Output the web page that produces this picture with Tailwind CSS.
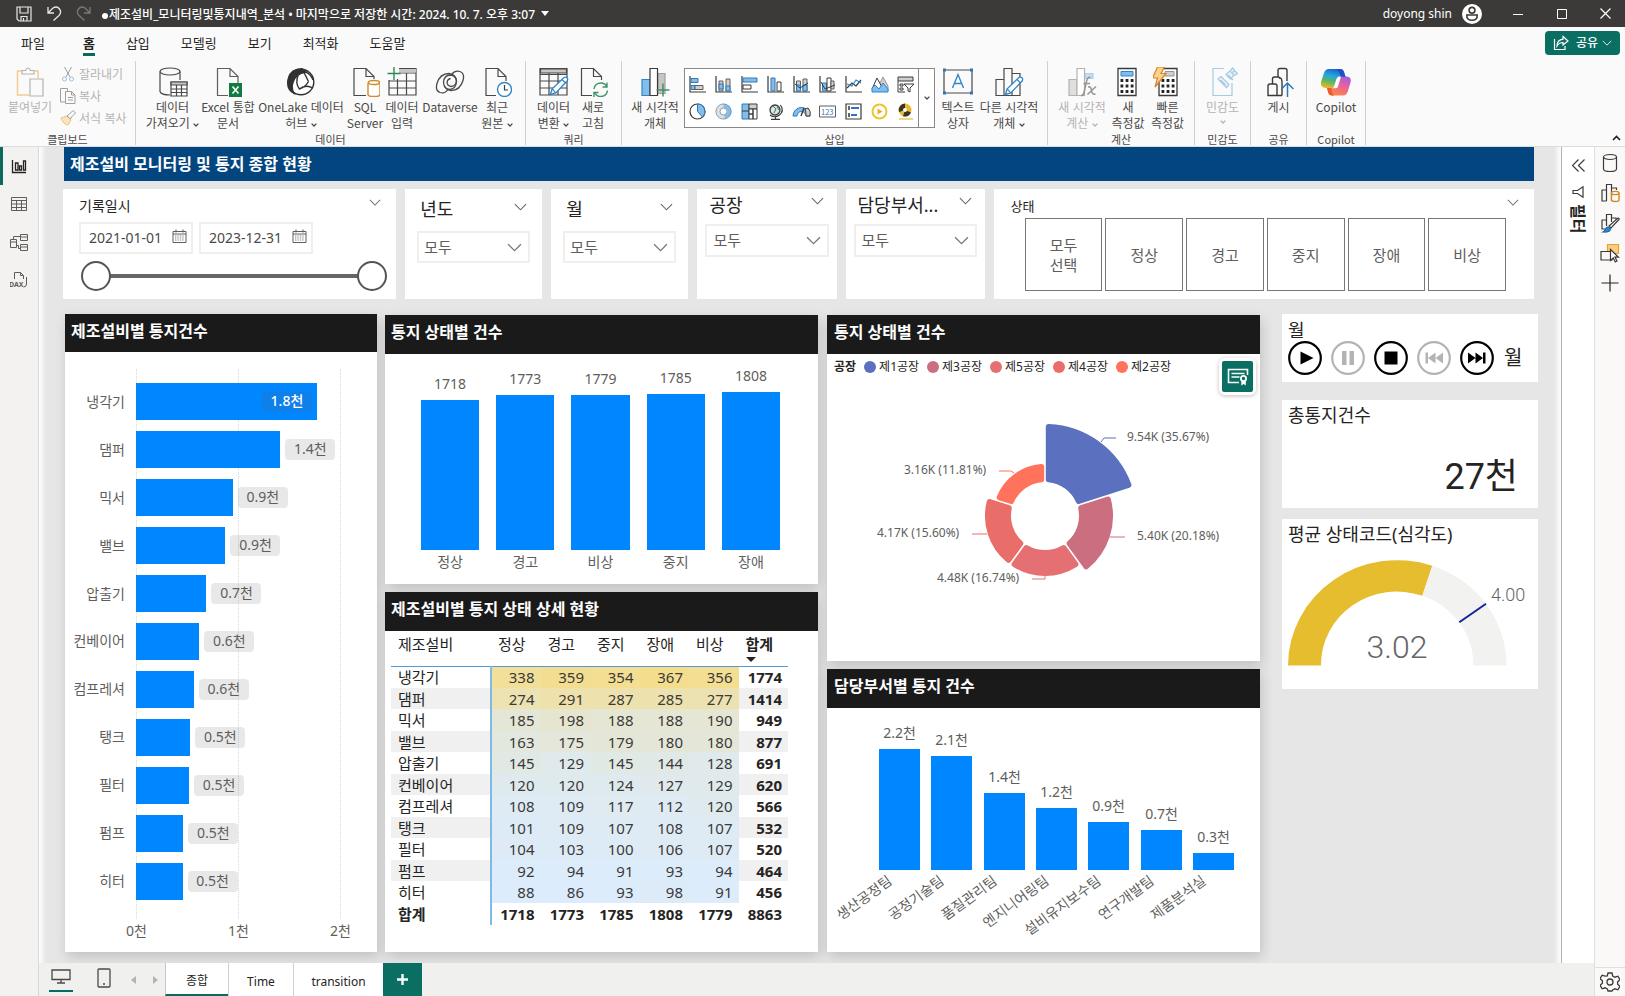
<!DOCTYPE html>
<html lang="ko">
<head>
<meta charset="utf-8">
<title>제조설비_모니터링및통지내역_분석</title>
<script src="https://cdn.jsdelivr.net/npm/@tailwindcss/browser@4"></script>
</head>
<body class="font-['Noto_Sans','Noto_Sans_CJK_KR',sans-serif] text-[#252423] bg-[#e6e6e6]">
<svg class="hidden">
  <symbol id="chev" viewBox="0 0 14 8"><path d="M1 1l6 6 6-6" fill="none" stroke="currentColor" stroke-width="1.2"/></symbol>
  <symbol id="mini" viewBox="0 0 6 4"><path d="M.6 .6l2.4 2.4 2.4-2.4" fill="none" stroke="currentColor" stroke-width="1.3"/></symbol>
  <symbol id="cal" viewBox="0 0 15 14"><path d="M1 2.5h13v11H1zM1 5h13M4 .5v3M11 .5v3" fill="none" stroke="#605e5c"/><path d="M3 7h9M3 9h9M3 11h9" stroke="#8a8886" stroke-dasharray="1.4 1"/></symbol>
  <symbol id="pencil" viewBox="0 0 20 20"><path d="M1.500 18.500l1.500-5.500L15 1.500q1.800-1 3 .3t.3 3L6.800 17z" fill="#fff" stroke="#2f86c9" stroke-width="1.300"/><path d="M3.200 13l3.600 3.800M13 3.500l3.500 3.500" stroke="#2f86c9" stroke-width="1.100"/></symbol>
</svg>

<div class="h-screen min-h-[900px] flex flex-col overflow-hidden">

<!-- title bar -->
<header class="h-[27px] shrink-0 bg-[#3b3a38] text-white flex items-center pl-4 pr-[14px]">
  <button aria-label="저장" class="w-4"><svg class="size-4" viewBox="0 0 16 16" fill="none" stroke="#e8e8e8" stroke-width="1.2"><path d="M1 1h14v14H3l-2-2zM4 1v6h8V1M5 15v-4.500h6V15M7.500 12v3"/></svg></button>
  <button aria-label="실행 취소" class="ml-[14px]"><svg class="size-4" viewBox="0 0 16 16" fill="none" stroke="#e8e8e8" stroke-width="1.3"><path d="M2 1v6h6M2 7l5-5q4-2.500 6.500 1t-.500 6.500L7.500 14.500"/></svg></button>
  <button aria-label="다시 실행" class="ml-[14px]"><svg class="size-4" viewBox="0 0 16 16" fill="none" stroke="#7b7a78" stroke-width="1.3"><path d="M14 1v6H8M14 7L9 2Q5-.500 2.500 3t.500 6.500l5.500 5"/></svg></button>
  <i class="ml-[10px] mr-px mt-1 size-[6px] rounded-full bg-white"></i>
  <h1 class="mt-[2px] text-xs font-medium whitespace-nowrap">제조설비_모니터링및통지내역_분석 • 마지막으로 저장한 시간: 2024. 10. 7. 오후 3:07</h1>
  <svg class="ml-[6px] w-2 h-[5px]" viewBox="0 0 8 5"><path d="M0 0h8L4 5z" fill="#fff"/></svg>
  <span class="ml-auto text-xs">doyong shin</span>
  <svg class="ml-[10px] size-5" viewBox="0 0 20 20"><circle cx="10" cy="10" r="10" fill="#fff"/><g fill="none" stroke="#3b3a38" stroke-width="1.600"><circle cx="10" cy="6.300" r="2.900"/><path d="M4.800 11h10.400q.300 5.300-5.200 5.300T4.800 11z"/></g></svg>
  <button aria-label="최소화" class="ml-[31px]"><svg class="w-[10px] h-[10px]" viewBox="0 0 10 10"><path d="M0 5.500h10" stroke="#fff"/></svg></button>
  <button aria-label="최대화" class="ml-[34px]"><svg class="w-[10px] h-[10px]" viewBox="0 0 10 10"><path d="M.5 .5h9v9h-9z" fill="none" stroke="#fff"/></svg></button>
  <button aria-label="닫기" class="ml-[33px]"><svg class="w-[11px] h-[11px]" viewBox="0 0 11 11"><path d="M.5 .5l10 10M10.500 .5l-10 10" stroke="#fff" stroke-width="1.200"/></svg></button>
</header>

<!-- ribbon tabs -->
<nav class="h-[34px] shrink-0 bg-[#fafafa] flex items-center pl-[21px] pr-[5px] pb-[3px] text-[13px] leading-[18px]">
  <button class="mr-[38px]">파일</button>
  <div class="flex gap-[31px]">
    <button class="font-bold relative">홈<span class="absolute inset-x-0 -bottom-1 h-[3px] bg-[#0b6a5d]"></span></button>
    <button>삽입</button><button>모델링</button><button>보기</button><button>최적화</button><button>도움말</button>
  </div>
  <button class="ml-auto h-6 w-[75px] rounded bg-[#0a6f62] text-white text-xs font-medium flex items-center justify-center gap-[7px]">
    <svg class="w-4 h-4" viewBox="0 0 16 16" fill="none" stroke="#fff" stroke-width="1.200"><path d="M1.500 4v10.500h10.500V11M10 1.500l5 4.500-5 4V7.500Q6 7.500 4 11q0-6 6-6.800z"/></svg>
    공유<svg class="w-[10px] h-[6px] -ml-[3px]"><use href="#chev"/></svg>
  </button>
</nav>

<!-- ribbon -->
<section class="h-[86px] shrink-0 bg-[#fafafa] flex font-['Noto_Sans_CJK_KR',sans-serif] text-xs leading-4 relative text-[#4a4948] whitespace-nowrap border-b border-[#dcdcdc] [&>div]:border-r [&>div]:border-[#d2d0ce] [&>div]:flex [&>div]:flex-col [&>div]:items-center [&>div]:mb-px [&_h2]:text-[11px] [&_h2]:leading-[11px] [&_button]:flex [&_button]:flex-col [&_button]:items-center [&_button_svg]:shrink-0">
  <div class="w-[136px]">
    <div class="h-[73px] w-full flex text-[#b5b3b1]">
      <button class="w-[60px] pt-[6px] gap-[2px]"><svg class="size-[30px]" viewBox="0 0 30 30" fill="none"><path d="M11 4H2.500v24H14M20 4h3v7" stroke="#f3cb95" stroke-width="1.500"/><path d="M7 7V3.500h3.500Q11.500 1 13 1t2.500 2.500H19V7zM15 12h13v17H15z" stroke="#b5b3b1" fill="#fafafa" stroke-width="1.200"/></svg><span>붙여넣기</span></button>
      <div class="flex flex-col pt-[5px] gap-[6px] [&>button]:!flex-row [&>button]:gap-[3px]">
        <button><svg class="size-4" viewBox="0 0 16 16" fill="none"><path d="M4.500 1l5.500 10M11.500 1L6 11" stroke="#a19f9d"/><circle cx="4.500" cy="13" r="2" stroke="#9cc0de"/><circle cx="11.500" cy="13" r="2" stroke="#9cc0de"/></svg>잘라내기</button>
        <button><svg class="size-4" viewBox="0 0 16 16" fill="none" stroke="#a19f9d"><path d="M5 14H.500V.500h7V3M5.500 3.500h6l3.500 3.500v8.500H5.500zM11.500 3.500V7H15M8 9.500h5M8 12h5"/></svg>복사</button>
        <button><svg class="size-4" viewBox="0 0 16 16" fill="none"><path d="M1 8l6-2 4 4-3 5q-5-1-7-7z" fill="#fbe3c0" stroke="#f0c080"/><path d="M7 6l2-1.500 4-4 2.500 2.500-4 4L10.500 9z" stroke="#a19f9d"/></svg>서식 복사</button>
      </div>
    </div>
    <h2>클립보드</h2>
  </div>

  <div class="w-[390px]">
    <div class="h-[73px] w-full flex pl-2 [&>button]:pt-[6px] [&>button]:gap-[2px]">
      <button class="w-[57px]"><svg class="size-[30px]" viewBox="0 0 30 30" fill="none" stroke="#4a4948" stroke-width="1.200"><ellipse cx="12" cy="4.500" rx="10" ry="3.500"/><path d="M2 4.500v20q1 3.500 10 3.500M22 4.500V13"/><path d="M13 15h16v14H13z" fill="#fff"/><path d="M13 15h16v3H13z" fill="#c8c6c4"/><path d="M13 22h16M13 25.500h16M18.500 18v11M23.500 18v11"/></svg><span>데이터<br>가져오기 <svg class="inline w-[6px] h-1"><use href="#mini"/></svg></span></button>
      <button class="w-[54px]"><svg class="size-[30px]" viewBox="0 0 30 30"><path d="M15 28.500H4.500V1.500H17l8 8V16M17 1.500v8h8" fill="none" stroke="#605e5c" stroke-width="1.200"/><path d="M16 16h13v14H16z" fill="#107c41"/><path d="M19.500 19.500l6 7M25.500 19.500l-6 7" stroke="#fff" stroke-width="1.600"/></svg><span>Excel 통합<br>문서</span></button>
      <button class="w-[92px]"><svg class="size-[30px]" viewBox="0 0 30 30" fill="none" stroke="#323130" stroke-width="1.400"><circle cx="15" cy="15" r="12.800" fill="#fff"/><path d="M16 1.800Q5 2 2.500 11-.500 22 8 26.500q-3-6-1-11Q9 7 20 5z" fill="#323130"/><path d="M12 8.500q-3 8 1.500 13.500 6-2 9-7.500M13.500 22q6-5 13.500-1M19.500 5q5 1.500 7.500 8M18 5.500l4.500 9"/></svg><span>OneLake 데이터<br>허브 <svg class="inline w-[6px] h-1"><use href="#mini"/></svg></span></button>
      <button class="w-[36px]"><svg class="size-[30px]" viewBox="0 0 30 30" fill="none"><path d="M16 28.500H4V1.500h12l8 8V12M16 1.500v8h8" stroke="#4a4948" stroke-width="1.200"/><path d="M18 15.500v12q0 2 6 2t6-2v-12" stroke="#d08a2a" stroke-width="1.400" fill="#fff"/><ellipse cx="24" cy="15.500" rx="5.500" ry="2" stroke="#d08a2a" stroke-width="1.400" fill="#fff"/></svg><span>SQL<br>Server</span></button>
      <button class="w-[38px]"><svg class="size-[30px]" viewBox="0 0 30 30" fill="none" stroke="#4a4948" stroke-width="1.200"><path d="M12 1.500h17V28H2V13M12 6h17M2 14h27M2 21h27M10.500 12v16M19.500 6v22"/><path d="M12 2h17v3.500H12z" fill="#c8c6c4" stroke="none"/><path d="M7 0v13M.500 6.500h13" stroke="#2b8a57" stroke-width="1.400"/></svg><span>데이터<br>입력</span></button>
      <button class="w-[58px]"><svg class="size-[30px]" viewBox="0 0 30 30" fill="none" stroke="#4a4948" stroke-width="1.300"><path d="M25 4.500q5 2 3 9-3 10-12 10-7-1-7.500-8Q9 8 15.500 8q5.500.500 6 6-.500 5-5.500 5.500-3.500-.500-4-4 .500-3.500 3.500-4"/><path d="M5 25.500q-5-2-3-9 3-10 12-10 7 1 7.500 8-.500 7.500-7 8-3 0-5-3M25 4.500Q20 3 17 7M5 25.500q5 1.500 8-3"/></svg><span>Dataverse</span></button>
      <button class="w-[36px]"><svg class="size-[30px]" viewBox="0 0 30 30" fill="none"><path d="M14 28.500H4V1.500h12l8 8V14M16 1.500v8h8" stroke="#4a4948" stroke-width="1.200"/><circle cx="22.500" cy="22.500" r="7" fill="#fff" stroke="#2f86c9" stroke-width="1.400"/><path d="M22.500 18v5H26" stroke="#3b3a39" stroke-width="1.200"/></svg><span>최근<br>원본 <svg class="inline w-[6px] h-1"><use href="#mini"/></svg></span></button>
    </div>
    <h2>데이터</h2>
  </div>

  <div class="w-[96px]">
    <div class="h-[73px] w-full flex pl-[7px] [&>button]:pt-[6px] [&>button]:gap-[2px]">
      <button class="w-[41px]"><svg class="size-[30px]" viewBox="0 0 30 30" fill="none" stroke="#4a4948" stroke-width="1.200"><path d="M1 1.500h27v26.500H1zM1 7.500h27M1 14h27M1 21h27M10 6v22M19 6v22"/><path d="M1.500 2h26v4h-26z" fill="#c8c6c4"/><use href="#pencil" x="10" y="9" width="20" height="20"/></svg><span>데이터<br>변환 <svg class="inline w-[6px] h-1"><use href="#mini"/></svg></span></button>
      <button class="w-[38px]"><svg class="size-[30px]" viewBox="0 0 30 30" fill="none"><path d="M14 28.500H3.500V1.500h12l8 8V13M15.500 1.500v8h8" stroke="#4a4948" stroke-width="1.200"/><path d="M16 22q1-6 7-6 4 0 5.500 3.500M29 15.500v4.500h-4.500M29.500 23.500q-1 6-7 6-4 0-5.500-3.500M16 30v-4.500h4.500" stroke="#3f9268" stroke-width="1.400"/></svg><span>새로<br>고침</span></button>
    </div>
    <h2>쿼리</h2>
  </div>

  <div class="w-[426px]">
    <div class="h-[73px] w-full flex pl-1 [&>button]:pt-[6px] [&>button]:gap-[2px]">
      <button class="w-[58px]"><svg class="size-[30px]" viewBox="0 0 30 30" stroke-width="1.200"><path d="M2 12.500h8v16H2z" fill="#83bdec" stroke="#2f86c9"/><path d="M18 6.500h7v20h-7z" fill="#c8c6c4" stroke="#a19f9d"/><path d="M10 1.500h7.500v27H10z" fill="#fff" stroke="#3b3a39"/><path d="M23 16.500v13M16.500 23h13" stroke="#3f9268" stroke-width="1.500"/></svg><span>새 시각적<br>개체</span></button>
      <div class="mt-[7px] h-[60px] w-[251px] border border-[#8a8886] bg-white flex">
        <div id="gallery" class="flex-1 grid grid-cols-9 items-center justify-items-center py-[2px] [&_svg]:size-[17px] [&_svg]:overflow-visible"></div>
        <button aria-label="더 보기" class="w-4 border-l border-[#8a8886] justify-center"><svg class="w-[6px] h-1"><use href="#mini"/></svg></button>
      </div>
      <button class="w-[46px]"><svg class="size-[30px]" viewBox="0 0 30 30" fill="none"><path d="M1 3h28v23H1z" stroke="#4a4948" stroke-width="1.200"/><path d="M9.500 21L15 7.500 20.500 21M11.500 16.500h7" stroke="#2f86c9" stroke-width="1.400"/><path d="M0 1.500h3v3H0zM27 1.500h3v3h-3zM0 24.500h3v3H0zM27 24.500h3v3h-3z" fill="#2f78b5"/></svg><span>텍스트<br>상자</span></button>
      <button class="w-[56px]"><svg class="size-[30px]" viewBox="0 0 30 30" fill="none" stroke="#4a4948" stroke-width="1.200"><path d="M10 12.500H2v16h8M10 28.500v-27h8v27zM18 6.500h8v22h-8"/><use href="#pencil" x="10" y="9" width="20" height="20"/></svg><span>다른 시각적<br>개체 <svg class="inline w-[6px] h-1"><use href="#mini"/></svg></span></button>
    </div>
    <h2>삽입</h2>
  </div>

  <div class="w-[147px]">
    <div class="h-[73px] w-full flex pl-[8px] [&>button]:pt-[6px] [&>button]:gap-[2px]">
      <button class="w-[52px] text-[#b5b3b1]"><svg class="size-[30px]" viewBox="0 0 30 30" stroke-width="1.200" stroke="#b5b3b1"><path d="M2 12.500h8v16H2z" fill="#e1dfdd"/><path d="M18 6.500h8v5h-8z" fill="#c4dff2" stroke="#a9cfe9"/><path d="M10 1.500h7.500v27H10z" fill="#fff"/><path d="M23.500 10.500q-3-1-4 4l-2.500 11q-.800 3.500-3 3M16.500 16.500h6.500M21 20q3-1 3.500 3.500t4 3.500M29 19.500L20.500 27.500" fill="none" stroke="#979593" stroke-width="1.500"/></svg><span>새 시각적<br>계산 <svg class="inline w-[6px] h-1"><use href="#mini"/></svg></span></button>
      <button class="w-[40px]"><svg class="size-[30px]" viewBox="0 0 30 30"><path d="M5 1.500h18v27H5z" fill="#fff" stroke="#3b3a39" stroke-width="1.300"/><path d="M8 4.500h12v4.500H8z" fill="#83bdec" stroke="#2f86c9"/><path d="M7.500 13.500h13M7.500 19h13M7.500 24.500h13" stroke="#252423" stroke-width="2.800" stroke-dasharray="2.800 2.300"/></svg><span>새<br>측정값</span></button>
      <button class="w-[39px]"><svg class="size-[30px]" viewBox="0 0 30 30"><path d="M6 1.500h18v27H6z" fill="#fff" stroke="#3b3a39" stroke-width="1.300"/><path d="M12 4.500h9v4.500h-9z" fill="#d2d0ce" stroke="#979593"/><path d="M8.500 13.500h13M8.500 19h13M8.500 24.500h13" stroke="#252423" stroke-width="2.800" stroke-dasharray="2.800 2.300"/><path d="M4.500 0h7L8 6.500h5L2 20l2.500-9H-.500z" fill="#fbd38b" stroke="#d8842a" stroke-width="1.200"/></svg><span>빠른<br>측정값</span></button>
    </div>
    <h2>계산</h2>
  </div>

  <div class="w-[56px]">
    <div class="h-[73px] pt-[6px] text-[#b5b3b1]"><button class="gap-[2px]"><svg class="size-[30px]" viewBox="0 0 30 30" fill="none" stroke="#a5cbe3" stroke-width="1.200"><path d="M16 1.500H5v27h19V16"/><path d="M10 12l3-2.500 8 8-2.500 3zM12.500 13l5 5M18 7.500l4-3.500 4 4-3.500 4zM22 4l2.500-3 2 2L25 5l2.500-.500 2 2L26 8.500M20 8l5 5" fill="#e8f3fa"/></svg><span>민감도</span><svg class="mt-[3px] w-[6px] h-1"><use href="#mini"/></svg></button></div>
    <h2>민감도</h2>
  </div>
  <div class="w-[56px]">
    <div class="h-[73px] pt-[6px]"><button class="gap-[2px]"><svg class="size-[30px]" viewBox="0 0 30 30" fill="none" stroke="#3b3a39" stroke-width="1.400"><path d="M4 28.500V19q0-2 2-2h5q2 0 2 2v9.500zM8.500 17v-5q0-2 2-2H14q2 0 2 2M13 28.500h5M14 10V3.500q0-2 2-2h5q2 0 2 2V14M18 28.500V16q0-5-2-5"/><path d="M23.500 30V16.500M17.500 22l6-6 6 6" stroke="#2f78b5" stroke-width="1.500"/></svg><span>게시</span></button></div>
    <h2>공유</h2>
  </div>
  <div class="w-[59px]">
    <div class="h-[73px] pt-[6px]"><button class="gap-[2px]"><svg class="size-[30px]" viewBox="0 0 30 30">
      <defs><linearGradient id="cpA" x1=".6" y1="0" x2=".3" y2="1"><stop offset="0" stop-color="#1b5fd0"/><stop offset=".35" stop-color="#22a6df"/><stop offset=".65" stop-color="#57b66a"/><stop offset="1" stop-color="#f0b81c"/></linearGradient><linearGradient id="cpB" x1=".8" y1="0" x2=".3" y2="1"><stop offset="0" stop-color="#a45ae6"/><stop offset=".5" stop-color="#ee6590"/><stop offset="1" stop-color="#fb8a44"/></linearGradient></defs>
      <path d="M8 2h11q3 0 4 3l1.500 5H19q-2.500 0-3.300 2.500L13.500 18q-.800 3-3.500 3H4q-5-1-4-6l3-9q1.200-4 5-4z" fill="url(#cpA)"/>
      <path d="M22 28.500H11q-3 0-3.800-3L6 21h4q2.700 0 3.500-3l2-6q.700-2.500 3.500-2.500h7q5 1 3.500 6l-2.700 9Q25.500 28.500 22 28.500z" fill="url(#cpB)"/>
      <path d="M18 9.500q-2 .500-2.600 2.500l-2.400 7.500q-.500 1.500-2 1.800h4q1.500-.300 2-1.800l3-10z" fill="#fff"/><path d="M15 2h4q3 0 4 3l1.500 5-5-.500Q18 3 15 2z" fill="#1c50c4"/><path d="M6 21l1.200 4.500q.800 3 3.800 3h2q-2-2-3-7.500z" fill="#f0592c"/></svg><span>Copilot</span></button></div>
    <h2>Copilot</h2>
  </div>
  <button aria-label="리본 축소" class="ml-auto mr-1 self-end mb-[5px]"><svg class="w-[9px] h-[6px] rotate-180" viewBox="0 0 9 6"><path d="M1 1l3.500 3.500L8 1" fill="none" stroke="#252423" stroke-width="1.700"/></svg></button>
</section>

<div class="flex-1 min-h-0 flex">
  <!-- view switcher -->
  <nav class="w-[39px] shrink-0 bg-[#f3f2f1] border-r border-[#d8d8d8] flex flex-col [&>button]:h-[38px] [&>button]:flex [&>button]:items-center [&>button]:justify-center">
    <button aria-label="보고서" class="border-l-3 border-[#0b6a5d] pr-[3px]"><svg class="size-4" viewBox="0 0 16 16" fill="none" stroke="#252423" stroke-width="1.300"><path d="M1.500 2v12.500H15M4.500 5H7v7H4.500zM8.500 8h2v4h-2zM12.500 3h2v9h-2z"/></svg></button>
    <button aria-label="테이블"><svg class="size-4" viewBox="0 0 16 16" fill="none" stroke="#605e5c"><path d="M.5 1.500h15v13H.5zM.5 4.500h15M.5 8h15M.5 11.500h15M5.500 4.500v10M10.500 4.500v10"/></svg></button>
    <button aria-label="모델"><svg class="size-[18px]" viewBox="0 0 18 18" fill="none" stroke="#605e5c"><path d="M.5 6.500h6v8h-6zM.5 9h6M10.500 1.500h7v6h-7zM10.500 4h7M10.500 11.500h7v6h-7zM10.500 14h7M3.500 6.500v-3h7M6.500 12.500h2v3h2"/></svg></button>
    <button aria-label="DAX 쿼리"><svg class="size-[18px]" viewBox="0 0 18 18" fill="none" stroke="#605e5c"><path d="M4.500 8V1.500h6l3 3V8M10.500 1.500v3h3M16.500 6v7q0 3-3 3"/><text x="-1" y="15.500" font-size="7" font-weight="700" fill="#605e5c" stroke="none">DAX</text></svg></button>
  </nav>

  <div class="flex-1 min-w-0 flex flex-col">
    <div class="flex-1 min-h-0 flex">
      <!-- report canvas -->
      <main class="flex-1 min-w-0 flex bg-[#e6e6e6]">
        <div class="w-[7px] shrink-0 bg-linear-to-r from-white to-[#e6e6e6]"></div>
        <div class="flex-1 min-w-0 flex flex-col pl-[17px] pr-4 pb-[11px]">
          <h1 class="h-[34px] shrink-0 ml-px mr-1 bg-[#03457f] text-white text-base leading-[35px] font-bold pl-[6px]">제조설비 모니터링 및 통지 종합 현황</h1>

          <section class="mt-2 mr-1 h-[110px] shrink-0 grid grid-cols-[333fr_137fr_137fr_139fr_139fr_540fr] gap-[9px] [&>div]:bg-white [&>div]:min-w-0">
            <div class="pl-4 pr-[9px] pt-[7px] flex flex-col">
              <div class="flex items-center justify-between pr-[6px] h-5"><h2 class="text-sm leading-5">기록일시</h2><svg class="w-[12px] h-[7px] mb-2 text-[#777]"><use href="#chev"/></svg></div>
              <div class="flex gap-[6px] mt-[6px]">
                <label class="w-[114px] h-8 border-2 border-[#f0efee] flex items-center pl-2 pr-1"><input aria-label="시작 날짜" value="2021-01-01" class="min-w-0 flex-1 text-sm text-[#4a4948] outline-none"><svg class="w-[15px] h-[14px] mb-1"><use href="#cal"/></svg></label>
                <label class="w-[114px] h-8 border-2 border-[#f0efee] flex items-center pl-2 pr-1"><input aria-label="종료 날짜" value="2023-12-31" class="min-w-0 flex-1 text-sm text-[#4a4948] outline-none"><svg class="w-[15px] h-[14px] mb-1"><use href="#cal"/></svg></label>
              </div>
              <div class="relative h-[30px] mt-[7px] ml-[2px]">
                <div class="absolute inset-x-4 top-[13px] h-1 bg-[#666]"></div>
                <input type="range" aria-label="시작" value="0" class="absolute inset-0 w-full h-[30px] m-0 appearance-none bg-transparent [&::-webkit-slider-thumb]:appearance-none [&::-webkit-slider-thumb]:size-[30px] [&::-webkit-slider-thumb]:rounded-full [&::-webkit-slider-thumb]:bg-white [&::-webkit-slider-thumb]:border-2 [&::-webkit-slider-thumb]:border-solid [&::-webkit-slider-thumb]:border-[#555]">
                <input type="range" aria-label="종료" value="100" class="absolute inset-0 w-full h-[30px] m-0 appearance-none bg-transparent [&::-webkit-slider-thumb]:appearance-none [&::-webkit-slider-thumb]:size-[30px] [&::-webkit-slider-thumb]:rounded-full [&::-webkit-slider-thumb]:bg-white [&::-webkit-slider-thumb]:border-2 [&::-webkit-slider-thumb]:border-solid [&::-webkit-slider-thumb]:border-[#555]">
              </div>
            </div>
            <div class="px-3 pt-2">
              <div class="flex items-center justify-between px-[3px] h-6"><label for="f-year" class="text-lg leading-6">년도</label><svg class="w-[13px] h-2 mb-1 text-[#666]"><use href="#chev"/></svg></div>
              <div class="relative mt-[10px]"><select id="f-year" class="w-full h-8 border-2 border-[#f0efee] text-[15px] text-[#605e5c] pl-[5px] appearance-none"><option>모두</option></select><svg class="absolute right-2 top-3 w-[15px] h-[9px] text-[#777] pointer-events-none"><use href="#chev"/></svg></div>
            </div>
            <div class="px-3 pt-2">
              <div class="flex items-center justify-between px-[3px] h-6"><label for="f-month" class="text-lg leading-6">월</label><svg class="w-[13px] h-2 mb-1 text-[#666]"><use href="#chev"/></svg></div>
              <div class="relative mt-[10px]"><select id="f-month" class="w-full h-8 border-2 border-[#f0efee] text-[15px] text-[#605e5c] pl-[5px] appearance-none"><option>모두</option></select><svg class="absolute right-2 top-3 w-[15px] h-[9px] text-[#777] pointer-events-none"><use href="#chev"/></svg></div>
            </div>
            <div class="px-2 pt-1">
              <div class="flex items-center justify-between pl-1 pr-[5px] h-6"><label for="f-plant" class="text-lg leading-6">공장</label><svg class="w-[13px] h-2 mb-2 text-[#666]"><use href="#chev"/></svg></div>
              <div class="relative mt-[7px]"><select id="f-plant" class="w-full h-[33px] border-2 border-[#f0efee] text-[15px] text-[#605e5c] pl-[6px] appearance-none"><option>모두</option></select><svg class="absolute right-2 top-3 w-[15px] h-[9px] text-[#777] pointer-events-none"><use href="#chev"/></svg></div>
            </div>
            <div class="px-2 pt-1">
              <div class="flex items-center justify-between pl-1 pr-[5px] h-6"><label for="f-dept" class="text-lg leading-6">담당부서...</label><svg class="w-[13px] h-2 mb-2 text-[#666]"><use href="#chev"/></svg></div>
              <div class="relative mt-[7px]"><select id="f-dept" class="w-full h-[33px] border-2 border-[#f0efee] text-[15px] text-[#605e5c] pl-[6px] appearance-none"><option>모두</option></select><svg class="absolute right-2 top-3 w-[15px] h-[9px] text-[#777] pointer-events-none"><use href="#chev"/></svg></div>
            </div>
            <div class="pl-[31px] pr-7 pt-[7px] flex flex-col">
              <div class="flex items-center justify-between h-5 -ml-[14px] -mr-[13px]"><h2 class="text-[13px] leading-5">상태</h2><svg class="w-[12px] h-[7px] mb-2 text-[#777]"><use href="#chev"/></svg></div>
              <div class="mt-[2px] h-[73px] grid grid-cols-6 gap-[3px] text-[15px] leading-5 text-[#605e5c] [&>button]:border [&>button]:border-[#777]">
                <button>모두<br>선택</button><button>정상</button><button>경고</button><button>중지</button><button>장애</button><button>비상</button>
              </div>
            </div>
          </section>

          <section class="mt-[15px] ml-[2px] flex-1 min-h-0 grid grid-cols-[312fr_433fr_434fr_270fr] gap-2">
            <!-- notices per machine -->
            <article class="bg-white min-h-0 flex flex-col shadow-[2px_5px_12px_rgba(0,0,0,0.16)]">
              <h2 class="h-[38px] shrink-0 bg-[#1a1a1a] text-white text-base leading-[34px] font-bold pl-[6px]">제조설비별 통지건수</h2>
              <div class="flex-1 min-h-0 relative flex flex-col pt-[26px] text-sm text-[#605e5c]">
                <div class="absolute left-[71px] right-[36px] top-[17px] bottom-[33px] flex justify-between [&>i]:border-l [&>i]:border-dotted [&>i]:border-[#dddbd9]"><i></i><i></i><i></i></div>
                <div id="machines" class="relative flex-1 min-h-0 flex flex-col"></div>
                <div class="h-[47px] shrink-0 flex justify-between items-center pl-[61px] pr-[26px] leading-5 pt-1"><span>0천</span><span>1천</span><span>2천</span></div>
              </div>
            </article>

            <div class="min-h-0 flex flex-col gap-2 pt-px">
              <!-- notices per status -->
              <article class="flex-[269_1_0px] min-h-0 bg-white flex flex-col shadow-[2px_5px_12px_rgba(0,0,0,0.16)]">
                <h2 class="h-[39px] shrink-0 bg-[#1a1a1a] text-white text-base leading-[35px] font-bold pl-[6px]">통지 상태별 건수</h2>
                <div id="status" class="flex-1 min-h-0 grid grid-cols-5 gap-[17px] pl-[36px] pr-[38px] text-sm leading-5 text-[#605e5c]"></div>
                <div class="h-[34px] shrink-0 grid grid-cols-5 gap-[17px] pl-[36px] pr-[38px] pt-[2px] text-sm leading-5 text-[#605e5c] text-center"><span>정상</span><span>경고</span><span>비상</span><span>중지</span><span>장애</span></div>
              </article>
              <!-- matrix -->
              <article class="flex-[360_1_0px] min-h-0 bg-white shadow-[2px_5px_12px_rgba(0,0,0,0.16)]">
                <h2 class="h-[39px] bg-[#1a1a1a] text-white text-base leading-[34px] font-bold pl-[6px]">제조설비별 통지 상태 상세 현황</h2>
                <div class="pl-[6px] pr-[30px]">
                <table class="w-full table-fixed border-collapse text-[15px] leading-5">
                  <colgroup><col class="w-[100px]"><col><col><col><col><col><col></colgroup>
                  <thead><tr class="h-[35px] align-top border-b border-[#4f9bd2] text-left [&>th]:pl-[7px] [&>th]:pt-[3px] [&>th]:pb-0 [&>th]:font-normal">
                    <th>제조설비</th><th>정상</th><th>경고</th><th>중지</th><th>장애</th><th>비상</th><th class="!font-bold relative">합계<svg class="absolute left-[7px] top-[26px] w-[10px] h-[5px]" viewBox="0 0 10 5"><path d="M0 0h10L5 5z" fill="#252423"/></svg></th>
                  </tr></thead>
                  <tbody id="matrix"></tbody>
                </table>
                </div>
              </article>
            </div>

            <div class="min-h-0 flex flex-col gap-2 pt-px pl-px">
              <!-- rose chart -->
              <article class="flex-[346_1_0px] min-h-0 bg-white flex flex-col relative shadow-[2px_5px_12px_rgba(0,0,0,0.16)]">
                <h2 class="h-[39px] shrink-0 bg-[#1a1a1a] text-white text-base leading-[35px] font-bold pl-[7px]">통지 상태별 건수</h2>
                <div class="h-[25px] shrink-0 flex items-center pl-[7px] text-xs leading-4 [&>span]:flex [&>span]:items-center [&>span]:gap-[3px] [&>span]:mr-2 [&_i]:size-3 [&_i]:rounded-full">
                  <b class="mr-2">공장</b><span><i class="bg-[#5b71bf]"></i>제1공장</span><span><i class="bg-[#cb6e80]"></i>제3공장</span><span><i class="bg-[#e57073]"></i>제5공장</span><span><i class="bg-[#e96e69]"></i>제4공장</span><span><i class="bg-[#ff725c]"></i>제2공장</span>
                </div>
                <svg id="rose" class="flex-1 min-h-0 w-full" viewBox="0 25 433 282" font-size="12" fill="#605e5c">
                  <g fill="none">
                    <path d="M274 88l3-4h12" stroke="#5b71bf"/><path d="M283 183h15" stroke="#cb6e80"/><path d="M205 225h13v-3" stroke="#e57073"/><path d="M145 180h15" stroke="#e96e69"/><path d="M172 117h12l3 2" stroke="#ff725c"/>
                  </g>
                  <text x="300" y="87">9.54K (35.67%)</text><text x="310" y="186">5.40K (20.18%)</text><text x="110" y="228">4.48K (16.74%)</text><text x="50" y="183">4.17K (15.60%)</text><text x="77" y="120">3.16K (11.81%)</text>
                </svg>
                <button aria-label="인증" class="absolute right-1 top-[43px] size-[37px] rounded-md bg-white shadow-[0_1px_4px_rgba(0,0,0,0.25)] flex items-center justify-center"><svg class="size-[31px]" viewBox="0 0 31 31"><rect width="31" height="31" rx="2" fill="#0a6f62"/><path d="M17 21.500H6.500v-13h19V14M9.500 12.500h13M9.500 16h8" fill="none" stroke="#fff" stroke-width="1.600"/><circle cx="21.500" cy="17.500" r="2.600" fill="#0a6f62" stroke="#fff" stroke-width="1.800"/><path d="M19.300 19.500h4.500v5l-2.200-1.500-2.300 1.500z" fill="#fff"/></svg></button>
              </article>
              <!-- notices per department -->
              <article class="flex-[283_1_0px] min-h-0 bg-white flex flex-col shadow-[2px_5px_12px_rgba(0,0,0,0.16)]">
                <h2 class="h-[39px] shrink-0 bg-[#1a1a1a] text-white text-base leading-[35px] font-bold pl-[7px]">담당부서별 통지 건수</h2>
                <svg id="dept" class="flex-1 min-h-0 w-full" viewBox="0 0 433 244" fill="#605e5c"></svg>
              </article>
            </div>

            <div class="min-h-0 flex flex-col pl-[14px] [&>article]:bg-white">
              <article class="h-[68px] shrink-0 pl-[6px]">
                <h2 class="text-lg leading-6 pt-[4px]">월</h2>
                <div class="-mt-px flex items-center gap-[9px] [&_svg]:size-[34px] [&_svg]:block">
                  <button aria-label="재생"><svg viewBox="0 0 34 34"><circle cx="17" cy="17" r="15.800" fill="none" stroke="#000" stroke-width="2.200"/><path d="M12.500 10.500v13l13-6.500z"/></svg></button>
                  <button aria-label="일시 중지"><svg viewBox="0 0 34 34" fill="#b3b3b3"><circle cx="17" cy="17" r="15.800" fill="none" stroke="#b3b3b3" stroke-width="2.200"/><path d="M11 10h4.500v14H11zM18.500 10H23v14h-4.500z"/></svg></button>
                  <button aria-label="중지"><svg viewBox="0 0 34 34"><circle cx="17" cy="17" r="15.800" fill="none" stroke="#000" stroke-width="2.200"/><path d="M10.500 10.500h13v13h-13z"/></svg></button>
                  <button aria-label="이전"><svg viewBox="0 0 34 34" fill="#b3b3b3"><circle cx="17" cy="17" r="15.800" fill="none" stroke="#b3b3b3" stroke-width="2.200"/><path d="M8.500 11.500h2.500v11H8.500zM11 17l7.500-5.500v11zM18.500 17l7.500-5.500v11z"/></svg></button>
                  <button aria-label="다음"><svg viewBox="0 0 34 34"><circle cx="17" cy="17" r="15.800" fill="none" stroke="#000" stroke-width="2.200"/><path d="M23 11.500h2.500v11H23zM23 17l-7.500-5.500v11zM15.500 17L8 11.500v11z"/></svg></button>
                  <span class="ml-px text-xl leading-6">월</span>
                </div>
              </article>
              <article class="mt-[18px] h-[108px] shrink-0 pl-[6px] pr-5">
                <h2 class="text-lg leading-[30px]">총통지건수</h2>
                <p class="mt-[25px] text-right text-4xl leading-[44px] font-normal font-['Roboto','Noto_Sans_CJK_KR',sans-serif]">27천</p>
              </article>
              <article class="mt-[11px] h-[170px] shrink-0 flex flex-col">
                <h2 class="text-lg leading-[31px] pl-[6px]">평균 상태코드(심각도)</h2>
                <svg class="w-full flex-1 min-h-0" viewBox="0 0 256 139" font-family="Roboto, sans-serif" fill="#666">
                  <path d="M6 115.500A109.300 105.500 0 0 1 150.300 15.700L140.300 45.700A76 73 0 0 0 39 115.500z" fill="#e6bd2f"/>
                  <path d="M150.300 15.700A109.300 105.500 0 0 1 224.600 115.500H191.300A76 73 0 0 0 140.300 45.700z" fill="#f2f2f1"/>
                  <path d="M177.300 72.300L204 53.700" stroke="#12239e" stroke-width="2"/>
                  <text x="209" y="51" font-size="18" font-weight="300">4.00</text>
                  <text x="115" y="108" font-size="32" font-weight="300" text-anchor="middle">3.02</text>
                </svg>
              </article>
            </div>
          </section>
        </div>
        <div class="w-[7px] shrink-0 bg-linear-to-l from-white to-[#e6e6e6]"></div>
      </main>

      <!-- collapsed filter pane -->
      <aside class="w-[33px] shrink-0 bg-white border-l border-[#b3b0ad] flex flex-col items-center pt-3">
        <button aria-label="펼치기"><svg class="w-[13px] h-[13px]" viewBox="0 0 13 13" fill="none" stroke="#3b3a39" stroke-width="1.200"><path d="M6.500 .5l-6 6 6 6M12.500 .5l-6 6 6 6"/></svg></button>
        <svg class="mt-[14px] w-3 h-3" viewBox="0 0 12 12" fill="none" stroke="#3b3a39" stroke-width="1.200"><path d="M11 .800v10.400L5.500 7.500H1v-3h4.500z"/></svg>
        <h2 class="mt-[6px] text-base leading-4 font-bold [writing-mode:vertical-rl] [text-orientation:sideways]">필터</h2>
      </aside>
    </div>

    <!-- page tabs -->
    <footer class="h-[33px] shrink-0 bg-[#f0f0ee] flex text-xs items-stretch">
      <button aria-label="데스크톱 레이아웃" class="ml-[10px] w-6 border-b-2 border-[#0b6a5d] mb-[4px] flex justify-center items-center"><svg class="w-5 h-[15px]" viewBox="0 0 20 15" fill="none" stroke="#4a4948" stroke-width="1.300"><path d="M1 1h18v9.500H1zM10 10.500v3M6 14h8"/></svg></button>
      <button aria-label="모바일 레이아웃" class="ml-6 mb-1"><svg class="w-[14px] h-5" viewBox="0 0 14 20" fill="none" stroke="#4a4948" stroke-width="1.300"><rect x="1" y="1" width="12" height="18" rx="1"/><path d="M6 16h2"/></svg></button>
      <button aria-label="이전 페이지" class="ml-5"><svg class="w-[5px] h-2" viewBox="0 0 5 8"><path d="M5 0v8L0 4z" fill="#b5b3b1"/></svg></button>
      <button aria-label="다음 페이지" class="ml-[17px]"><svg class="w-[5px] h-2" viewBox="0 0 5 8"><path d="M0 0v8l5-4z" fill="#b5b3b1"/></svg></button>
      <button class="ml-[7px] w-[63px] bg-white border-l border-[#c8c6c4] border-b-2 border-b-[#0b6a5d] pt-[5px]">종합</button>
      <button class="w-[65px] bg-white border-l border-[#d2d0ce] pt-[5px]">Time</button>
      <button class="w-[90px] bg-white border-l border-[#d2d0ce] pt-[5px]">transition</button>
      <button aria-label="새 페이지" class="w-[39px] bg-[#0a6f62] flex items-center justify-center"><svg class="size-[11px]" viewBox="0 0 11 11"><path d="M5.500 0v11M0 5.500h11" stroke="#fff" stroke-width="2.400"/></svg></button>
    </footer>
  </div>

  <!-- pane switcher -->
  <nav class="w-[31px] shrink-0 bg-[#faf9f8] border-l border-[#e1dfdd] flex flex-col items-center pt-px [&>button]:h-[30px] [&>button]:shrink-0 [&>button]:flex [&>button]:items-center [&_svg]:size-5">
    <button aria-label="데이터"><svg viewBox="0 0 20 20" fill="none" stroke="#3b3a39" stroke-width="1.200"><ellipse cx="10" cy="4" rx="6.500" ry="2.500"/><path d="M3.500 4v12q0 2.500 6.500 2.500t6.500-2.500V4"/></svg></button>
    <button aria-label="빌드"><svg viewBox="0 0 20 20" fill="none" stroke="#3b3a39" stroke-width="1.200"><path d="M6.500 7H2v11h4.500M6.500 18V1.500h5V18M11.500 5h5v2"/><path d="M11.500 10v7q0 1.500 3.800 1.500T19 17v-7" fill="#faf9f8" stroke="#d08a2a" stroke-width="1.400"/><ellipse cx="15.200" cy="10" rx="3.800" ry="1.600" fill="#faf9f8" stroke="#d08a2a" stroke-width="1.400"/></svg></button>
    <button aria-label="서식"><svg viewBox="0 0 20 20" fill="none" stroke="#3b3a39" stroke-width="1.200"><path d="M6.500 7H2v9h3M6.500 13V1.500h5V9M11.500 5H16v2M19 6.500l-8 8.500-2-2 9-8q1.500 0 1 1.500z"/><path d="M10.500 15.500q0 4-7.500 3.500 2-1 2.500-3 2-3.500 5-.500z" fill="#2f86c9" stroke="#1f6cab"/></svg></button>
    <button aria-label="선택"><svg viewBox="0 0 20 20" stroke-width="1.200"><path d="M7.500 1.500h11v9h-11z" fill="#f9cf7f" stroke="#e3a23a"/><path d="M1 8.500h11v8.500H1z" fill="#faf9f8" stroke="#3b3a39"/><path d="M10.500 6.500v11l2.800-2.500 2 4 1.700-1-2-3.800h3.500z" fill="#fff" stroke="#3b3a39"/></svg></button>
    <button aria-label="추가"><svg viewBox="0 0 20 20"><path d="M10 1.500v17M1.500 10h17" stroke="#252423" stroke-width="1.200"/></svg></button>
    <div class="mt-auto w-full h-[29px] border-t border-[#e1dfdd] flex items-center justify-center"><button aria-label="설정"><svg viewBox="0 0 20 20" fill="none" stroke="#3b3a39" stroke-width="1.300"><path d="M8 1h4l.700 3 2.200 1.200 3-1 2 3.500-2.300 2.100v2.400l2.300 2.100-2 3.500-3-1-2.200 1.200L12 19H8l-.700-2-2.200-1.200-3 1-2-3.500L2.400 11.200V8.800L.100 6.700l2-3.500 3 1L7.300 4z"/><circle cx="10" cy="10" r="3"/></svg></button></div>
  </nav>
</div>
</div>

<script>
const el = id => document.getElementById(id);

// visual gallery
const axis = '<path d="M1 0v16h16" fill="none" stroke="#3b3a39" stroke-width="1.200"/>';
const icons = [
  ['누적 가로 막대형', axis + '<path d="M2 2.500h7v4H2zM2 9.500h4v4H2z" fill="#83bdec" stroke="#2f78b5"/><path d="M6 9.500h8v4H6z" fill="#d2d0ce" stroke="#605e5c"/>'],
  ['누적 세로 막대형', axis + '<path d="M4 5h4v10H4zM11 3h4v12h-4z" fill="#d2d0ce" stroke="#605e5c"/><path d="M4 8h4v5H4zM11 10h4v5h-4z" fill="#83bdec" stroke="#2f78b5"/>'],
  ['묶은 가로 막대형', axis + '<path d="M2 2h14v4H2z" fill="#83bdec" stroke="#2f78b5"/><path d="M2 9h8v4H2z" fill="#fff" stroke="#3b3a39"/>'],
  ['묶은 세로 막대형', axis + '<path d="M4 2h4v13H4z" fill="#83bdec" stroke="#2f78b5"/><path d="M10 6h4v9h-4z" fill="#fff" stroke="#3b3a39"/>'],
  ['누적 콤보', axis + '<path d="M3.500 5h4v10h-4zM10 3h4v12h-4z" fill="#d2d0ce" stroke="#605e5c"/><path d="M3.500 9h4v6h-4zM10 9h4v6h-4z" fill="#83bdec" stroke="#2f78b5"/><path d="M2 8l5 4 8-5" fill="none" stroke="#3b3a39"/>'],
  ['묶은 콤보', axis + '<path d="M3.500 7h4v8h-4z" fill="#83bdec" stroke="#2f78b5"/><path d="M8 2h4v13H8z" fill="#fff" stroke="#3b3a39"/><path d="M12 5h3v8h-3z" fill="#d2d0ce" stroke="#605e5c"/><path d="M2 6l4 7 10-4" fill="none" stroke="#3b3a39"/>'],
  ['꺾은선형', axis + '<path d="M2 12l5-5 4 3 5-6" fill="none" stroke="#3b3a39" stroke-width="1.200"/><path d="M2 8l5 2 4-6 5 3" fill="none" stroke="#2f86c9" stroke-width="1.200"/>'],
  ['영역형', '<path d="M8 9l4-8 5 9v5z" fill="#d2d0ce" stroke="#979593"/><path d="M1 13L6 2l6 11z" fill="#fff" stroke="#3b3a39"/><path d="M1 16v-4l3-3 4 4 4-6 5 6v3z" fill="#83bdec" stroke="#2f86c9"/>'],
  ['슬라이서', '<path d="M1 1h15v4H1z" fill="#d2d0ce" stroke="#3b3a39"/><path d="M1 5v11h7M3 8h3v2H3zM3 12h3v2H3zM7 8h10l-4 4v4l-2-1v-3z" fill="#fff" stroke="#3b3a39"/>'],
  ['원형', '<circle cx="8.500" cy="8.500" r="7.500" fill="#fff" stroke="#3b3a39" stroke-width="1.200"/><path d="M8.500 1a7.500 7.500 0 0 1 5 13l-5-5.500z" fill="#83bdec" stroke="#2f78b5"/>'],
  ['도넛형', '<circle cx="8.500" cy="8.500" r="5.500" fill="none" stroke="#e1dfdd" stroke-width="4"/><path d="M8.500 3a5.500 5.500 0 0 1 1 11" fill="none" stroke="#83bdec" stroke-width="4"/><circle cx="8.500" cy="8.500" r="7.600" fill="none" stroke="#6d8aa0" stroke-width=".8"/><circle cx="8.500" cy="8.500" r="3.500" fill="none" stroke="#6d8aa0" stroke-width=".8"/>'],
  ['트리맵', '<path d="M1 1h7v15H1z" fill="#83bdec" stroke="#2f78b5"/><path d="M1 8h7M8 1h8v5H8z" fill="#d2d0ce" stroke="#3b3a39"/><path d="M8 6h4v5H8zM12 6h4v10h-4zM8 11h4v5H8z" fill="#fff" stroke="#3b3a39"/>'],
  ['지도', '<circle cx="8" cy="7" r="5" fill="#d5e9df" stroke="#3b3a39" stroke-width="1.300"/><path d="M6 3l3 3-2 4M10 4l2 3" stroke="#3b7a5c" fill="none"/><path d="M13.500 2q4 6-1 10-5 3.500-9.500 0M8.500 13.500V16M4 16.300h9" fill="none" stroke="#3b3a39" stroke-width="1.200"/>'],
  ['계기', '<path d="M0 13a8.500 8.500 0 0 1 17 0h-4a4.500 4.500 0 0 0-9 0z" fill="#83bdec" stroke="#2f78b5"/><path d="M8 13l3-8" stroke="#3b3a39" stroke-width="1.400"/><path d="M12 6l3-1a8 8 0 0 1 2 8h-4q0-4-1-7z" fill="#d2d0ce" stroke="#3b3a39"/>'],
  ['카드', '<path d="M.500 3h16v11H.500z" fill="#fff" stroke="#605e5c"/><text x="2" y="11.500" font-size="7.500" fill="#2f78b5">123</text>'],
  ['여러 행 카드', '<path d="M1 1h15v15H1z" fill="#fff" stroke="#3b3a39" stroke-width="1.200"/><path d="M4 3v4M4 10v4" stroke="#252423" stroke-width="1.400"/><path d="M6 5h8M6 12h6" stroke="#2f6fd0" stroke-width="1.800"/>'],
  ['재생 축', '<circle cx="8.500" cy="8.500" r="7" fill="#fff" stroke="#f2c230" stroke-width="2"/><path d="M6.500 5.500v6l5-3z" fill="#e8b020"/>'],
  ['데코레이션 원형', '<circle cx="8" cy="7" r="6.500" fill="#e9b92d"/><path d="M8 7V.500A6.500 6.500 0 0 0 2 9zM8 7l6 2.500A6.500 6.500 0 0 1 6 13.200z" fill="#3b3323"/><circle cx="8" cy="7" r="2" fill="#fff"/><path d="M2 16h14" stroke="#e9b92d" stroke-width="1.200"/>'],
];
el('gallery').innerHTML = icons.map(([name, body]) =>
  `<button aria-label="${name}"><svg viewBox="0 0 17 17">${body}</svg></button>`).join('');

// rows of the matrix: 정상, 경고, 중지, 장애, 비상, 합계
const rows = [
  ['냉각기', 338, 359, 354, 367, 356, 1774], ['댐퍼', 274, 291, 287, 285, 277, 1414],
  ['믹서', 185, 198, 188, 188, 190, 949], ['밸브', 163, 175, 179, 180, 180, 877],
  ['압출기', 145, 129, 145, 144, 128, 691], ['컨베이어', 120, 120, 124, 127, 129, 620],
  ['컴프레셔', 108, 109, 117, 112, 120, 566], ['탱크', 101, 109, 107, 108, 107, 532],
  ['필터', 104, 103, 100, 106, 107, 520], ['펌프', 92, 94, 91, 93, 94, 464],
  ['히터', 88, 86, 93, 98, 91, 456],
];
const heat = v => {
  const t = (v - 86) / 281, a = [220, 236, 253], b = [244, 221, 141];
  return `rgb(${a.map((c, i) => Math.round(c + (b[i] - c) * t)).join(',')})`;
};
el('matrix').innerHTML = rows.map(([name, ...v]) => `<tr class="group h-[22px] even:h-[21px]">
  <th scope="row" class="py-0 pl-[7px] font-normal text-left border-r-2 border-[#7fb9e4] group-even:bg-[#f0f0f0]">${name}</th>
  ${v.slice(0, 5).map(n => `<td class="py-0 pr-[6px] text-right text-[#3b3a39]" style="background:${heat(n)}">${n}</td>`).join('')}
  <td class="py-0 pr-[6px] text-right font-bold group-even:bg-[#f0f0f0]">${v[5]}</td></tr>`).join('') +
  `<tr class="h-[22px] font-bold"><th scope="row" class="py-0 pl-[7px] text-left border-r-2 border-[#7fb9e4]">합계</th>
  ${[1718, 1773, 1785, 1808, 1779, 8863].map(n => `<td class="py-0 pr-[6px] text-right">${n}</td>`).join('')}</tr>`;

el('machines').innerHTML = rows.map(([name, ...v], i) => {
  const label = (v[5] / 1000).toFixed(1) + '천';
  const pill = i
    ? `<span class="ml-[5px] w-[50px] h-[21px] shrink-0 rounded bg-black/9 text-center leading-[20px]">${label}</span>` : '';
  const inner = i ? '' : `<span class="w-[50px] h-[21px] rounded bg-[#0f7fea] text-white font-medium text-center leading-[20px]">${label}</span>`;
  return `<div class="flex-1 flex items-center pr-[37px]"><span class="w-[60px] mr-[11px] text-right leading-5 shrink-0">${name}</span>
    <div class="flex-1 min-w-0 flex items-center"><div class="h-[37px] shrink-0 bg-[#0086fe] flex items-center justify-end pr-[5px]" style="width:${v[5] / 20}%">${inner}</div>${pill}</div></div>`;
}).join('');

el('status').innerHTML = [1718, 1773, 1779, 1785, 1808].map(v =>
  `<div class="flex flex-col justify-end"><span class="text-center mb-[6px]">${v}</span><div class="shrink-0 bg-[#0086fe]" style="height:${v / 22.43}%"></div></div>`).join('');

// rose slices: five equal angles, radius by value
const cx = 218, cy = 162, step = Math.PI * 2 / 5;
const pt = (r, a) => `${(cx + r * Math.sin(a)).toFixed(1)} ${(cy - r * Math.cos(a)).toFixed(1)}`;
el('rose').insertAdjacentHTML('afterbegin', [[92, '#5b71bf'], [68, '#cb6e80'], [60, '#e57073'], [60, '#e96e69'], [52, '#ff725c']].map(([R, c], i) => {
  const o = R - 3, n = 37, a = i * step, b = a + step, da = Math.asin(3.8 / o), db = Math.asin(3.8 / n);
  return `<path d="M${pt(n, a + db)}L${pt(o, a + da)}A${o} ${o} 0 0 1 ${pt(o, b - da)}L${pt(n, b - db)}A${n} ${n} 0 0 0 ${pt(n, a + db)}z" fill="${c}" stroke="${c}" stroke-width="6" stroke-linejoin="round"/>`;
}).join(''));

el('dept').innerHTML = [['생산공정팀', '2.2천', 121], ['공정기술팀', '2.1천', 114], ['품질관리팀', '1.4천', 77], ['엔지니어링팀', '1.2천', 62], ['설비유지보수팀', '0.9천', 48], ['연구개발팀', '0.7천', 40], ['제품분석실', '0.3천', 17]].map(([n, v, h], i) => {
  const x = Math.round(52 + i * 52.3);
  return `<rect x="${x}" y="${162 - h}" width="41" height="${h}" fill="#0086fe"/>
    <text x="${x + 20.5}" y="${151 - h}" font-size="14" text-anchor="middle">${v}</text>
    <text transform="translate(${x + 14} 175) rotate(-36)" font-size="14" text-anchor="end">${n}</text>`;
}).join('');
</script>
</body>
</html>
